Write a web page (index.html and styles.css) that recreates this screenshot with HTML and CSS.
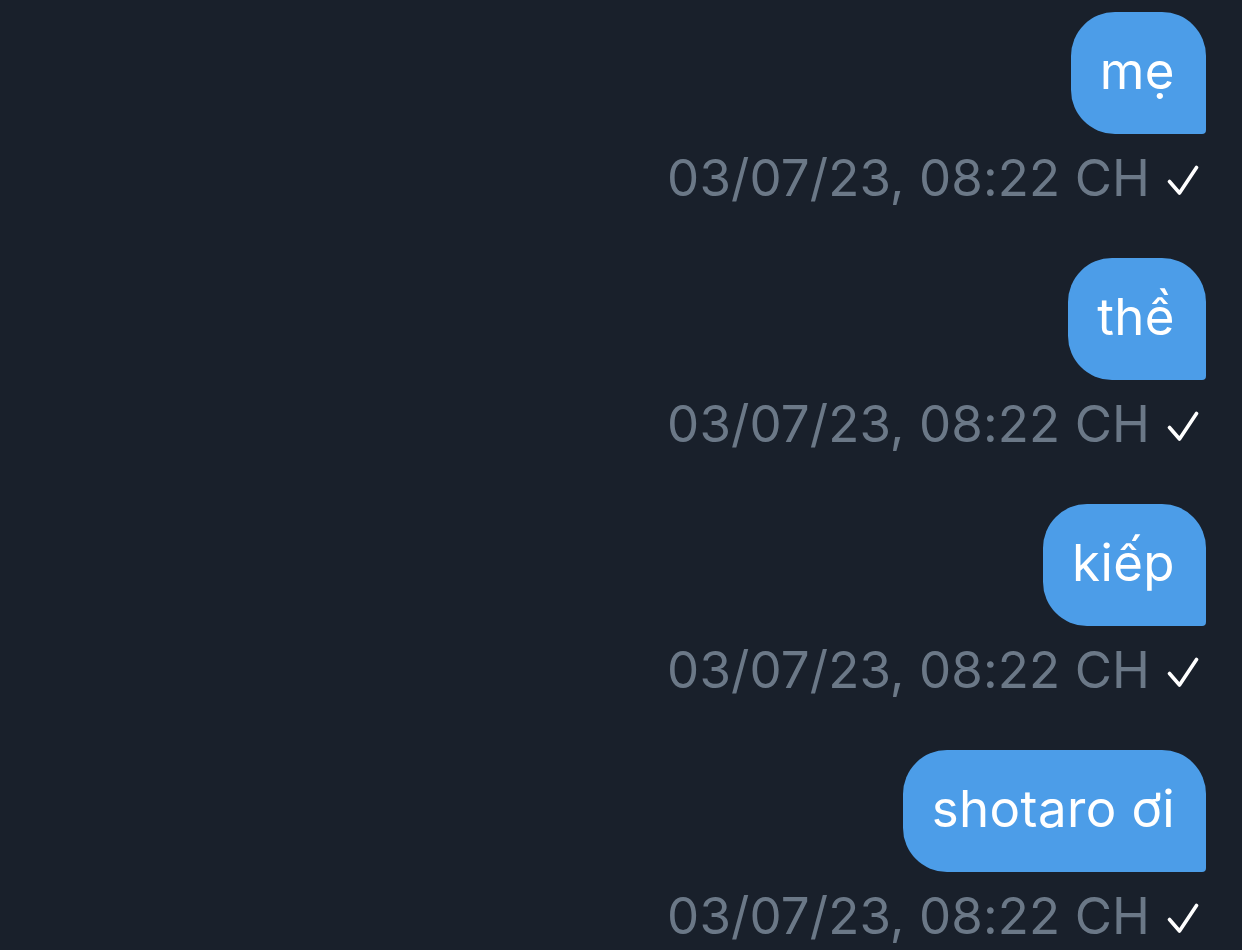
FILE: index.html
```html
<!DOCTYPE html>
<html lang="vi">
<head>
<meta charset="utf-8">
<link rel="stylesheet" href="styles.css">
</head>
<body>
<div class="chat">
  <div class="msg">
    <div class="bubble">mẹ</div>
    <div class="meta"><span class="time">03/07/23, 08:22 CH</span><svg class="tick" viewBox="0 0 32 32"><path d="M2.5 17.5 L12.5 29 L29.5 3.5"/></svg></div>
  </div>
  <div class="msg">
    <div class="bubble">thề</div>
    <div class="meta"><span class="time">03/07/23, 08:22 CH</span><svg class="tick" viewBox="0 0 32 32"><path d="M2.5 17.5 L12.5 29 L29.5 3.5"/></svg></div>
  </div>
  <div class="msg">
    <div class="bubble">kiếp</div>
    <div class="meta"><span class="time">03/07/23, 08:22 CH</span><svg class="tick" viewBox="0 0 32 32"><path d="M2.5 17.5 L12.5 29 L29.5 3.5"/></svg></div>
  </div>
  <div class="msg">
    <div class="bubble">shotaro ơi</div>
    <div class="meta"><span class="time">03/07/23, 08:22 CH</span><svg class="tick" viewBox="0 0 32 32"><path d="M2.5 17.5 L12.5 29 L29.5 3.5"/></svg></div>
  </div>
</div>
</body>
</html>
```

FILE: styles.css
```css
html, body {
  margin: 0;
  padding: 0;
  background: #19202b;
  height: 100%;
  overflow: hidden;
}
body {
  font-family: Inter, "Noto Sans", sans-serif;
}
.chat {
  display: flex;
  flex-direction: column;
  align-items: flex-end;
  padding: 12px 36px 0 0;
}
.msg {
  display: flex;
  flex-direction: column;
  align-items: flex-end;
  height: 246px;
}
.bubble {
  background: #4c9de8;
  color: #ffffff;
  font-size: 51px;
  line-height: 62px;
  letter-spacing: 0.4px;
  padding: 28px 31px 32px 29px;
  border-radius: 44px 44px 4px 44px;
}
.meta {
  display: flex;
  align-items: center;
  margin-top: 13px;
  margin-right: 7px;
  gap: 17px;
}
.time {
  color: #6b7887;
  font-size: 51px;
  line-height: 62px;
  letter-spacing: 0.1px;
}
.tick {
  width: 32px;
  height: 32px;
  fill: none;
  stroke: #ffffff;
  stroke-width: 3.6;
  stroke-linecap: round;
  stroke-linejoin: round;
  margin-top: 3px;
}
```
